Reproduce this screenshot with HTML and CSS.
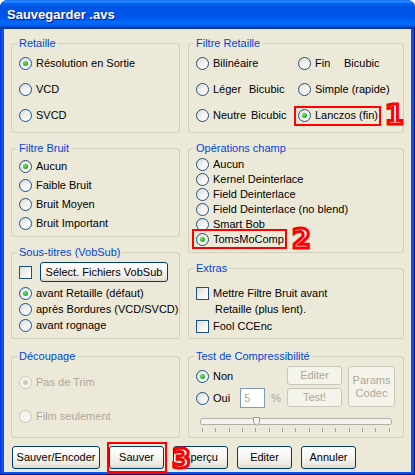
FILE: index.html
```html
<!DOCTYPE html>
<html lang="fr">
<head>
<meta charset="utf-8">
<title>Sauvegarder .avs</title>
<link rel="stylesheet" href="styles.css">
</head>
<body>
<div class="window">
  <div class="titlebar"><span class="title">Sauvegarder .avs</span></div>
  <div class="client">
    <div class="columns">
      <div class="col col-left">
        <div class="group g-retaille">
          <span class="legend">Retaille</span>
          <div class="stack s-retaille">
            <div class="opt"><span class="radio on"></span>Résolution en Sortie</div>
            <div class="opt"><span class="radio"></span>VCD</div>
            <div class="opt"><span class="radio"></span>SVCD</div>
          </div>
        </div>
        <div class="group g-bruit">
          <span class="legend">Filtre Bruit</span>
          <div class="stack s-bruit">
            <div class="opt"><span class="radio on"></span>Aucun</div>
            <div class="opt"><span class="radio"></span>Faible Bruit</div>
            <div class="opt"><span class="radio"></span>Bruit Moyen</div>
            <div class="opt"><span class="radio"></span>Bruit Important</div>
          </div>
        </div>
        <div class="group g-sous">
          <span class="legend">Sous-titres (VobSub)</span>
          <div class="sous-row">
            <span class="check"></span>
            <button class="btn btn-vob">Sélect. Fichiers VobSub</button>
          </div>
          <div class="stack s-sous">
            <div class="opt"><span class="radio on"></span>avant Retaille (défaut)</div>
            <div class="opt"><span class="radio"></span>après Bordures (VCD/SVCD)</div>
            <div class="opt"><span class="radio"></span>avant rognage</div>
          </div>
        </div>
        <div class="group g-decoup g-last">
          <span class="legend">Découpage</span>
          <div class="stack s-decoup">
            <div class="opt dis"><span class="radio on"></span>Pas de Trim</div>
            <div class="opt dis"><span class="radio"></span>Film seulement</div>
          </div>
        </div>
      </div>

      <div class="col col-right">
        <div class="group g-fretaille">
          <span class="legend">Filtre Retaille</span>
          <div class="grid-fr">
            <div class="opt"><span class="radio"></span>Bilinéaire</div>
            <div class="opt"><span class="radio"></span><span class="w-fin">Fin</span>Bicubic</div>
            <div class="opt"><span class="radio"></span><span class="w-leger">Léger</span>Bicubic</div>
            <div class="opt"><span class="radio"></span>Simple (rapide)</div>
            <div class="opt"><span class="radio"></span><span class="w-neutre">Neutre</span>Bicubic</div>
            <div class="opt mark m-lanczos"><span class="radio on"></span>Lanczos (fin)<span class="num-annot n1">1</span></div>
          </div>
        </div>
        <div class="group g-ops">
          <span class="legend">Opérations champ</span>
          <div class="stack s-ops">
            <div class="opt"><span class="radio"></span>Aucun</div>
            <div class="opt"><span class="radio"></span>Kernel Deinterlace</div>
            <div class="opt"><span class="radio"></span>Field Deinterlace</div>
            <div class="opt"><span class="radio"></span>Field Deinterlace (no blend)</div>
            <div class="opt"><span class="radio"></span>Smart Bob</div>
            <div class="opt mark m-toms"><span class="radio on"></span>TomsMoComp<span class="num-annot n2">2</span></div>
          </div>
        </div>
        <div class="group g-extras">
          <span class="legend">Extras</span>
          <div class="stack s-extras">
            <div class="copt"><span class="check"></span><span class="ctext">Mettre Filtre Bruit avant<span class="indent">Retaille (plus lent).</span></span></div>
            <div class="copt"><span class="check"></span><span class="ctext">Fool CCEnc</span></div>
          </div>
        </div>
        <div class="group g-test g-last">
          <span class="legend">Test de Compressibilité</span>
          <div class="test-top">
            <div class="test-radios">
              <div class="opt"><span class="radio on"></span>Non</div>
              <div class="opt oui"><span class="radio"></span>Oui<span class="numbox">5</span><span class="pct">%</span></div>
            </div>
            <div class="test-btns">
              <button class="btn dis btn-small">Editer</button>
              <button class="btn dis btn-small">Test!</button>
            </div>
            <button class="btn dis btn-params">Params<br>Codec</button>
          </div>
          <div class="slider">
            <div class="track"></div>
            <svg class="thumb" width="7" height="9" viewBox="0 0 7 9"><path d="M0.5 0.5 H6.5 V5.5 L3.5 8.5 L0.5 5.5 Z" fill="#F7F6F2" stroke="#9A9A94"/></svg>
            <div class="ticks">
              <span></span><span></span><span></span><span></span><span></span>
              <span></span><span></span><span></span><span></span><span></span>
              <span></span><span></span><span></span><span></span><span></span>
            </div>
          </div>
        </div>
      </div>
    </div>

    <div class="bottom">
      <button class="btn btn-wide">Sauver/Encoder</button>
      <span class="mark m-sauver"><button class="btn">Sauver</button><span class="num-annot n3">3</span></span>
      <button class="btn">Aperçu</button>
      <button class="btn">Editer</button>
      <button class="btn">Annuler</button>
    </div>
  </div>
</div>
</body>
</html>
```

FILE: styles.css
```css
* { box-sizing: border-box; }
html, body { margin: 0; padding: 0; background: #ffffff; }
body {
  font-family: "Liberation Sans", Arial, sans-serif;
  font-size: 11px;
  color: #000;
}

.window {
  width: 415px;
  height: 475px;
  background: #0055EA;
  border-radius: 8px 8px 0 0;
  display: flex;
  flex-direction: column;
  overflow: hidden;
  box-shadow: inset -1px -1px 0 #00138C, inset 1px 0 0 #0831D9;
}

.titlebar {
  height: 29px;
  flex: none;
  display: flex;
  align-items: center;
  padding-left: 7px;
  padding-bottom: 1px;
  background: linear-gradient(to bottom, #0058EE 0%, #3593FF 4%, #288EFF 6%, #127DFF 8%, #036FFC 10%, #0262EE 14%, #0057E5 20%, #0054E3 24%, #0055EB 56%, #005BF5 66%, #026AFE 76%, #0062EF 86%, #0052D6 92%, #0040AB 94%, #003092 100%);
}
.title {
  color: #fff;
  font-family: "Liberation Sans", Arial, sans-serif;
  font-weight: bold;
  font-size: 13px;
  text-shadow: 1px 1px 0 #0A1883;
}

.client {
  flex: 1;
  margin: 0 4px 3px 4px;
  background: #ECE9D8;
  display: flex;
  flex-direction: column;
}

.columns {
  display: flex;
  gap: 8px;
  padding: 14px 0 0 7px;
}
.col { display: flex; flex-direction: column; gap: 15px; }
.col-left { width: 169px; }
.col-right { width: 216px; }

.group {
  position: relative;
  border: 1px solid #D0D0BF;
  border-radius: 3px;
  padding-left: 7px;
}
.g-last { margin-top: 2px; }
.legend {
  position: absolute;
  top: -7px;
  left: 5px;
  padding: 0 2px;
  line-height: 13px;
  background: #ECE9D8;
  color: #0046D5;
  white-space: nowrap;
}

.g-retaille, .g-fretaille { height: 90px; }
.g-bruit { height: 89px; }
.g-sous { height: 87px; }
.g-decoup, .g-test { height: 82px; }
.g-ops { height: 105px; }
.g-extras { height: 71px; }

.stack { display: flex; flex-direction: column; align-items: flex-start; }
.s-retaille { padding-top: 12px; gap: 12px; }
.s-bruit { padding-top: 10px; gap: 5px; }
.s-sous { padding-top: 4px; gap: 2px; }
.s-decoup { padding-top: 18px; gap: 20px; }
.s-ops { padding-top: 8px; gap: 1px; }
.s-extras { padding-top: 16px; gap: 1px; }

.grid-fr {
  display: grid;
  grid-template-columns: 102px auto;
  row-gap: 12px;
  padding-top: 12px;
  justify-items: start;
}
.w-fin { display: inline-block; width: 29px; }
.w-leger { display: inline-block; width: 36px; }
.w-neutre { display: inline-block; width: 38px; }

.opt {
  display: inline-flex;
  align-items: center;
  height: 14px;
  line-height: 14px;
  white-space: nowrap;
}
.opt .radio { margin-right: 4px; }

.radio {
  position: relative;
  flex: none;
  width: 13px;
  height: 13px;
  border-radius: 50%;
  border: 1px solid #1C5180;
  background: linear-gradient(135deg, #DCDCD7 0%, #F4F4F0 55%, #FFFFFF 100%);
}
.radio.on::after {
  content: "";
  position: absolute;
  left: 3px;
  top: 3px;
  width: 5px;
  height: 5px;
  border-radius: 50%;
  background: radial-gradient(circle at 35% 35%, #6CE66C 0%, #2BB32B 60%, #1E911E 100%);
}
.opt.dis { color: #ACA899; }
.opt.dis .radio {
  border-color: #CAC8BB;
  background: #F4F3EE;
}
.opt.dis .radio.on::after { background: #CAC8BB; }

.check {
  flex: none;
  width: 13px;
  height: 13px;
  border: 1px solid #1C5180;
  background: linear-gradient(135deg, #DCDCD7 0%, #F4F4F0 55%, #FFFFFF 100%);
}

.sous-row {
  display: flex;
  align-items: center;
  gap: 8px;
  padding-top: 9px;
}

.copt { display: flex; align-items: flex-start; }
.copt .check { margin-top: 2px; margin-right: 4px; }
.ctext { line-height: 16px; }
.indent { display: block; padding-left: 2px; }

.btn {
  font-family: "Liberation Sans", Arial, sans-serif;
  font-size: 11px;
  color: #000;
  margin: 0;
  padding: 0;
  width: 55px;
  height: 23px;
  border: 1px solid #003C74;
  border-radius: 3px;
  background: linear-gradient(to bottom, #FFFFFF 0%, #F6F5F1 45%, #ECEAE2 80%, #DCD8CC 100%);
  display: inline-flex;
  align-items: center;
  justify-content: center;
  line-height: 13px;
  white-space: nowrap;
}
.btn.dis {
  border-color: #C9C7BA;
  background: #F5F4EA;
  color: #ACA899;
}
.btn-vob { width: 128px; height: 20px; }
.btn-wide { width: 88px; }
.btn-small { width: 55px; height: 19px; }
.btn-params { width: 47px; height: 41px; margin-left: 6px; white-space: normal; }

.test-top { display: flex; align-items: flex-start; padding-top: 9px; }
.test-radios {
  width: 91px;
  display: flex;
  flex-direction: column;
  align-items: flex-start;
  gap: 5px;
  padding-top: 3px;
}
.opt.oui { height: 20px; }
.numbox {
  display: inline-flex;
  align-items: center;
  width: 25px;
  height: 20px;
  margin-left: 10px;
  padding-left: 3px;
  border: 1px solid #7F9DB9;
  background: #FFFFFF;
  color: #ACA899;
}
.pct { margin-left: 6px; color: #ACA899; }
.test-btns { display: flex; flex-direction: column; gap: 3px; }

.slider {
  position: relative;
  width: 192px;
  margin: 10px 0 0 4px;
}
.track {
  height: 7px;
  border: 1px solid #B3B1A6;
  border-radius: 2px;
  background: #F4F3EE;
}
.thumb { position: absolute; left: 53px; top: -1px; }
.ticks {
  display: flex;
  justify-content: space-between;
  padding: 0 2px;
  margin-top: 3px;
}
.ticks span { width: 1px; height: 4px; background: #A4A29A; }

.bottom {
  display: flex;
  gap: 9px;
  padding: 8px 0 0 8px;
}

.mark { position: relative; }
.mark::after {
  content: "";
  position: absolute;
  border: 2px solid #FF0000;
  pointer-events: none;
}
.m-lanczos::after { top: -2px; bottom: -4px; left: -4px; right: -3px; }
.m-toms::after { top: -3px; bottom: -3px; left: -4px; right: -3px; }
.m-sauver { display: inline-flex; }
.m-sauver::after { top: -4px; bottom: -4px; left: -2px; right: -3px; }

.num-annot {
  position: absolute;
  font-family: "DejaVu Sans", sans-serif;
  font-weight: bold;
  font-size: 27px;
  line-height: 1;
  color: #FFFFFF;
  -webkit-text-stroke: 3px #FF0000;
  z-index: 2;
}
.n1 { left: calc(100% + 7px); top: -7px; }
.n2 { left: calc(100% + 8px); top: -7px; }
.n3 { left: calc(100% + 8px); top: -1px; }
```
